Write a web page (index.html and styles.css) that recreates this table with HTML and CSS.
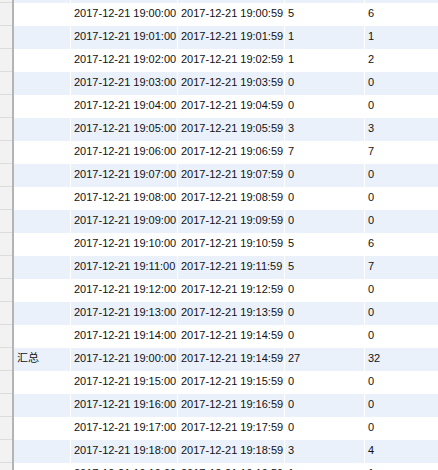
FILE: index.html
```html
<!DOCTYPE html>
<html lang="zh-CN">
<head>
  <meta charset="UTF-8">
  <title>统计结果</title>
  <link rel="stylesheet" href="styles.css">
</head>
<body>
  <div class="grid">
    <div class="gutter">
      <div class="g-row"></div><div class="g-row"></div><div class="g-row"></div><div class="g-row"></div>
      <div class="g-row"></div><div class="g-row"></div><div class="g-row"></div><div class="g-row"></div>
      <div class="g-row"></div><div class="g-row"></div><div class="g-row"></div><div class="g-row"></div>
      <div class="g-row"></div><div class="g-row"></div><div class="g-row"></div><div class="g-row"></div>
      <div class="g-row"></div><div class="g-row"></div><div class="g-row"></div><div class="g-row"></div>
      <div class="g-row"></div><div class="g-row"></div>
    </div>
    <div class="divider"></div>
    <table class="data">
      <colgroup>
        <col class="c-label"><col class="c-time"><col class="c-time"><col class="c-num"><col class="c-num2">
      </colgroup>
      <tbody>
        <!-- row scrolled mostly out of view -->
        <tr class="alt"><td></td><td></td><td></td><td></td><td></td></tr>
        <tr><td></td><td>2017-12-21 19:00:00</td><td>2017-12-21 19:00:59</td><td>5</td><td>6</td></tr>
        <tr class="alt"><td></td><td>2017-12-21 19:01:00</td><td>2017-12-21 19:01:59</td><td>1</td><td>1</td></tr>
        <tr><td></td><td>2017-12-21 19:02:00</td><td>2017-12-21 19:02:59</td><td>1</td><td>2</td></tr>
        <tr class="alt"><td></td><td>2017-12-21 19:03:00</td><td>2017-12-21 19:03:59</td><td>0</td><td>0</td></tr>
        <tr><td></td><td>2017-12-21 19:04:00</td><td>2017-12-21 19:04:59</td><td>0</td><td>0</td></tr>
        <tr class="alt"><td></td><td>2017-12-21 19:05:00</td><td>2017-12-21 19:05:59</td><td>3</td><td>3</td></tr>
        <tr><td></td><td>2017-12-21 19:06:00</td><td>2017-12-21 19:06:59</td><td>7</td><td>7</td></tr>
        <tr class="alt"><td></td><td>2017-12-21 19:07:00</td><td>2017-12-21 19:07:59</td><td>0</td><td>0</td></tr>
        <tr><td></td><td>2017-12-21 19:08:00</td><td>2017-12-21 19:08:59</td><td>0</td><td>0</td></tr>
        <tr class="alt"><td></td><td>2017-12-21 19:09:00</td><td>2017-12-21 19:09:59</td><td>0</td><td>0</td></tr>
        <tr><td></td><td>2017-12-21 19:10:00</td><td>2017-12-21 19:10:59</td><td>5</td><td>6</td></tr>
        <tr class="alt"><td></td><td>2017-12-21 19:11:00</td><td>2017-12-21 19:11:59</td><td>5</td><td>7</td></tr>
        <tr><td></td><td>2017-12-21 19:12:00</td><td>2017-12-21 19:12:59</td><td>0</td><td>0</td></tr>
        <tr class="alt"><td></td><td>2017-12-21 19:13:00</td><td>2017-12-21 19:13:59</td><td>0</td><td>0</td></tr>
        <tr><td></td><td>2017-12-21 19:14:00</td><td>2017-12-21 19:14:59</td><td>0</td><td>0</td></tr>
        <tr class="alt"><td>汇总</td><td>2017-12-21 19:00:00</td><td>2017-12-21 19:14:59</td><td>27</td><td>32</td></tr>
        <tr><td></td><td>2017-12-21 19:15:00</td><td>2017-12-21 19:15:59</td><td>0</td><td>0</td></tr>
        <tr class="alt"><td></td><td>2017-12-21 19:16:00</td><td>2017-12-21 19:16:59</td><td>0</td><td>0</td></tr>
        <tr><td></td><td>2017-12-21 19:17:00</td><td>2017-12-21 19:17:59</td><td>0</td><td>0</td></tr>
        <tr class="alt"><td></td><td>2017-12-21 19:18:00</td><td>2017-12-21 19:18:59</td><td>3</td><td>4</td></tr>
        <tr><td></td><td>2017-12-21 19:19:00</td><td>2017-12-21 19:19:59</td><td>1</td><td>1</td></tr>
      </tbody>
    </table>
  </div>
</body>
</html>
```

FILE: styles.css
```css
html, body {
  margin: 0;
  padding: 0;
  height: 100%;
  overflow: hidden;
  background-color: #fff;
}
body {
  font-family: "Liberation Sans", Arial, "Noto Sans CJK SC", sans-serif;
  font-size: 11px;
  color: #111;
}
.grid {
  display: flex;
  align-items: flex-start;
  margin-top: -20px;
}
.gutter {
  width: 12px;
  flex: none;
  background-color: #f2f2f2;
}
.g-row {
  height: 22px;
  border-bottom: 1px solid #dcdcdc;
}
.divider {
  width: 2px;
  height: 520px;
  flex: none;
  background-color: #b4b4b4;
}
.data {
  border-collapse: separate;
  border-spacing: 0;
  table-layout: fixed;
  width: 424px;
}
.c-label { width: 57px; }
.c-time { width: 107px; }
.c-num { width: 80px; }
.c-num2 { width: 73px; }
.data td {
  height: 23px;
  line-height: 21px;
  padding: 0 0 2px 3px;
  border-right: 1px solid #fff;
  white-space: nowrap;
  overflow: hidden;
  box-sizing: border-box;
  vertical-align: top;
}
.data td:last-child {
  border-right: 0;
}
.data tr.alt td {
  background-color: #eaf1fb;
}
```
